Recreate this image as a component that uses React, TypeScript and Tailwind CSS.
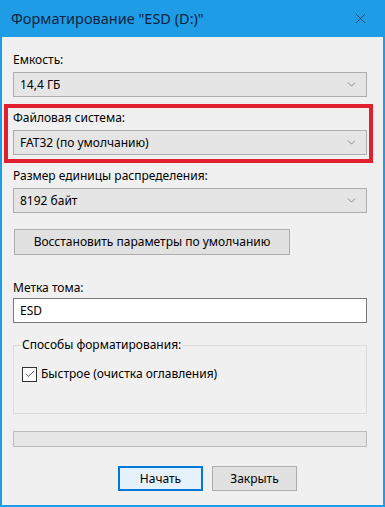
import { Check, ChevronDown, X } from "lucide-react";

const font = { fontFamily: '"Noto Sans", "Open Sans", sans-serif' };

const Combo = ({ value }: { value: string }) => (
  <div className="h-[25px] flex items-center pl-[6px] pr-[8px] bg-[#e5e5e5] border border-[#adadad] text-[12px] text-black">
    <span>{value}</span>
    <ChevronDown size={13} strokeWidth={1.2} className="ml-auto text-[#5a5a5a]" />
  </div>
);

const Label = ({ children }: { children: string }) => (
  <div className="h-[16px] leading-[16px] text-[12px] text-black">{children}</div>
);

export default function App() {
  return (
    <div
      className="w-[385px] h-[507px] flex flex-col bg-[#1e9ce6] px-[2px] pb-[2px]"
      style={font}
    >
      <div className="h-[37px] shrink-0 flex items-center pl-[9px] pr-[14px] text-[14.5px] text-[#0e2440]">
        <span>Форматирование "ESD (D:)"</span>
        <X size={17} strokeWidth={1} className="ml-auto text-[#1a2a40]" />
      </div>

      <div className="flex-1 bg-[#f0f0f0] pl-[11px] pr-[16px] pt-[15px] flex flex-col">
        <Label>Емкость:</Label>
        <div className="mt-[4px]">
          <Combo value="14,4 ГБ" />
        </div>

        <div className="relative mt-[13px]">
          <Label>Файловая система:</Label>
          <div className="mt-[4px]">
            <Combo value="FAT32 (по умолчанию)" />
          </div>
          <div className="absolute left-[-9px] right-[-6px] top-[-6px] bottom-[-8px] border-[4px] border-[#e0202e] pointer-events-none" />
        </div>

        <div className="mt-[13px]">
          <Label>Размер единицы распределения:</Label>
        </div>
        <div className="mt-[4px]">
          <Combo value="8192 байт" />
        </div>

        <button className="mt-[16px] ml-[1px] w-[276px] h-[26px] bg-[#e1e1e1] border border-[#adadad] text-[12px] text-black">
          Восстановить параметры по умолчанию
        </button>

        <div className="mt-[25px]">
          <Label>Метка тома:</Label>
        </div>
        <div className="mt-[2px] h-[25px] flex items-center pl-[6px] bg-white border border-[#7a7a7a] text-[12px] text-black">
          ESD
        </div>

        <div className="relative mt-[22px] h-[69px] border border-[#dcdcdc]">
          <div className="absolute left-[7px] top-[-9px] px-[1px] bg-[#f0f0f0] leading-[16px] text-[12px] text-black">
            Способы форматирования:
          </div>
          <div className="mt-[19px] ml-[8px] flex items-center gap-[4px] text-[12px] text-black">
            <div className="w-[15px] h-[15px] bg-white border border-[#333] flex items-center justify-center">
              <Check size={12} strokeWidth={1.4} className="text-[#222]" />
            </div>
            <span>Быстрое (очистка оглавления)</span>
          </div>
        </div>

        <div className="mt-[17px] h-[16px] bg-[#e6e6e6] border border-[#bcbcbc]" />

        <div className="mt-[19px] flex gap-[9px] pl-[105px]">
          <button className="w-[85px] h-[25px] bg-[#e5f1fb] border-2 border-[#0078d7] text-[12px] text-black">
            Начать
          </button>
          <button className="w-[85px] h-[25px] bg-[#e1e1e1] border border-[#adadad] text-[12px] text-black">
            Закрыть
          </button>
        </div>
      </div>
    </div>
  );
}
